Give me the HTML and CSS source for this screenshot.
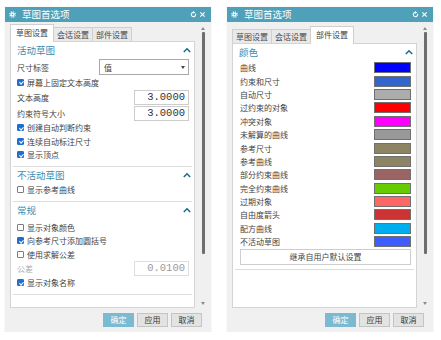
FILE: index.html
```html
<!DOCTYPE html>
<html lang="zh-CN">
<head>
    <meta charset="UTF-8">
    <meta name="viewport" content="width=device-width, initial-scale=1.0">
    <title>草图首选项</title>
    <link rel="stylesheet" href="styles.css">
</head>
<body>
<div class="desk">

    <!-- 草图设置 -->
    <div class="dialog">
        <div class="titlebar">
            <svg class="gear" viewBox="0 0 16 16"><circle cx="8" cy="8" r="6" fill="none" stroke="#fff" stroke-width="3.2" stroke-dasharray="2.4 2.32"/><circle cx="8" cy="8" r="4.6" fill="#fff"/><circle cx="8" cy="8" r="1.9" fill="#4fa1b9"/></svg>
            <span class="title">草图首选项</span>
            <svg class="tb-icon" viewBox="0 0 16 16"><path d="M12.6 6.2A5 5 0 1 1 8 3" fill="none" stroke="#fff" stroke-width="2.4"/><polygon points="7,0 12,3.2 7,6.4" fill="#fff"/></svg>
            <svg class="tb-icon" viewBox="0 0 16 16"><path d="M3 3L13 13M13 3L3 13" stroke="#fff" stroke-width="2.6"/></svg>
        </div>
        <div class="main">
            <div class="content">
                <div class="tabs">
                    <div class="tab active">草图设置</div>
                    <div class="tab">会话设置</div>
                    <div class="tab">部件设置</div>
                </div>
                <div class="panel">
                    <div class="section">
                        <div class="sec-head"><span>活动草图</span><svg class="caret" viewBox="0 0 10 7"><polyline points="1,6 5,2 9,6" fill="none" stroke="#1f6e92" stroke-width="2"/></svg></div>
                        <div class="row field tall"><span>尺寸标签</span><div class="select"><span>值</span><i class="dd"></i></div></div>
                        <div class="row check on short"><i class="box"></i>屏幕上固定文本高度</div>
                        <div class="row field"><span>文本高度</span><div class="num">3.0000</div></div>
                        <div class="row field"><span>约束符号大小</span><div class="num">3.0000</div></div>
                        <div class="row check on"><i class="box"></i>创建自动判断约束</div>
                        <div class="row check on"><i class="box"></i>连续自动标注尺寸</div>
                        <div class="row check on"><i class="box"></i>显示顶点</div>
                    </div>
                    <div class="section">
                        <div class="sec-head"><span>不活动草图</span><svg class="caret" viewBox="0 0 10 7"><polyline points="1,6 5,2 9,6" fill="none" stroke="#1f6e92" stroke-width="2"/></svg></div>
                        <div class="row check"><i class="box"></i>显示参考曲线</div>
                    </div>
                    <div class="section">
                        <div class="sec-head"><span>常规</span><svg class="caret" viewBox="0 0 10 7"><polyline points="1,6 5,2 9,6" fill="none" stroke="#1f6e92" stroke-width="2"/></svg></div>
                        <div class="row check first"><i class="box"></i>显示对象颜色</div>
                        <div class="row check on"><i class="box"></i>向参考尺寸添加圆括号</div>
                        <div class="row check"><i class="box"></i>使用求解公差</div>
                        <div class="row field mid off"><span>公差</span><div class="num">0.0100</div></div>
                        <div class="row check on"><i class="box"></i>显示对象名称</div>
                    </div>
                </div>
            </div>
            <div class="scroll">
                <i class="sc-up"></i>
                <i class="thumb"></i>
                <i class="sc-space"></i>
                <i class="sc-down"></i>
            </div>
        </div>
        <div class="footer">
            <div class="btn primary">确定</div>
            <div class="btn">应用</div>
            <div class="btn">取消</div>
        </div>
    </div>

    <!-- 部件设置 -->
    <div class="dialog">
        <div class="titlebar">
            <svg class="gear" viewBox="0 0 16 16"><circle cx="8" cy="8" r="6" fill="none" stroke="#fff" stroke-width="3.2" stroke-dasharray="2.4 2.32"/><circle cx="8" cy="8" r="4.6" fill="#fff"/><circle cx="8" cy="8" r="1.9" fill="#4fa1b9"/></svg>
            <span class="title">草图首选项</span>
            <svg class="tb-icon" viewBox="0 0 16 16"><path d="M12.6 6.2A5 5 0 1 1 8 3" fill="none" stroke="#fff" stroke-width="2.4"/><polygon points="7,0 12,3.2 7,6.4" fill="#fff"/></svg>
            <svg class="tb-icon" viewBox="0 0 16 16"><path d="M3 3L13 13M13 3L3 13" stroke="#fff" stroke-width="2.6"/></svg>
        </div>
        <div class="main">
            <div class="content lower">
                <div class="tabs">
                    <div class="tab">草图设置</div>
                    <div class="tab">会话设置</div>
                    <div class="tab active">部件设置</div>
                </div>
                <div class="panel">
                    <div class="section">
                        <div class="sec-head"><span>颜色</span><svg class="caret" viewBox="0 0 10 7"><polyline points="1,6 5,2 9,6" fill="none" stroke="#1f6e92" stroke-width="2"/></svg></div>
                        <div class="colors">
                            <div class="crow"><span>曲线</span><i class="swatch c-curve"></i></div>
                            <div class="crow"><span>约束和尺寸</span><i class="swatch c-dim"></i></div>
                            <div class="crow"><span>自动尺寸</span><i class="swatch c-auto"></i></div>
                            <div class="crow"><span>过约束的对象</span><i class="swatch c-over"></i></div>
                            <div class="crow"><span>冲突对象</span><i class="swatch c-conflict"></i></div>
                            <div class="crow"><span>未解算的曲线</span><i class="swatch c-unsolved"></i></div>
                            <div class="crow"><span>参考尺寸</span><i class="swatch c-ref"></i></div>
                            <div class="crow"><span>参考曲线</span><i class="swatch c-ref"></i></div>
                            <div class="crow"><span>部分约束曲线</span><i class="swatch c-partial"></i></div>
                            <div class="crow"><span>完全约束曲线</span><i class="swatch c-full"></i></div>
                            <div class="crow"><span>过期对象</span><i class="swatch c-stale"></i></div>
                            <div class="crow"><span>自由度箭头</span><i class="swatch c-dof"></i></div>
                            <div class="crow"><span>配方曲线</span><i class="swatch c-recipe"></i></div>
                            <div class="crow"><span>不活动草图</span><i class="swatch c-inactive"></i></div>
                        </div>
                        <div class="inherit">继承自用户默认设置</div>
                    </div>
                </div>
            </div>
            <div class="scroll">
                <i class="sc-up"></i>
                <i class="thumb"></i>
                <i class="sc-space"></i>
                <i class="sc-down"></i>
            </div>
        </div>
        <div class="footer">
            <div class="btn primary">确定</div>
            <div class="btn">应用</div>
            <div class="btn">取消</div>
        </div>
    </div>

</div>
</body>
</html>
```

FILE: styles.css
```css
body {
    margin: 0;
    background: #ffffff;
    font-family: "Noto Sans CJK SC", "Noto Sans", sans-serif;
    font-size: 8px;
    color: #3f3f3f;
}
.desk {
    display: flex;
    gap: 16px;
    padding: 7px 0 0 5px;
}

/* dialog frame */
.dialog {
    width: 206px;
    height: 325px;
    display: flex;
    flex-direction: column;
    background: #f0f0f0;
    box-shadow: 0 0 1px rgba(0, 0, 0, 0.15);
}
.titlebar {
    height: 15px;
    flex: none;
    display: flex;
    align-items: center;
    gap: 2px;
    padding: 0 5px 0 4px;
    background: #4fa1b9;
    color: #ffffff;
    font-size: 9.5px;
}
.gear {
    width: 7px;
    height: 7px;
    margin-right: 4px;
}
.title {
    flex: 1;
    line-height: 15px;
}
.tb-icon {
    width: 7px;
    height: 7px;
}

.main {
    flex: 1;
    min-height: 0;
    display: flex;
    padding: 2px 0 0 5px;
}
.content {
    width: 185px;
    display: flex;
    flex-direction: column;
}
.content.lower {
    padding-top: 2px;
}

/* tabs */
.tabs {
    height: 17px;
    flex: none;
    display: flex;
    align-items: flex-end;
}
.tab {
    height: 14px;
    line-height: 13px;
    padding: 0 3px;
    box-sizing: border-box;
    background: #e9e9e9;
    border: 1px solid #cfcfcf;
    border-bottom: none;
    margin-right: -1px;
    color: #4a4a4a;
}
.tab.active {
    height: 18px;
    line-height: 16px;
    padding: 0 5px;
    margin-bottom: -1px;
    background: #ffffff;
    position: relative;
    z-index: 1;
    color: #3f3f3f;
}

.panel {
    flex: 1;
    background: #ffffff;
    border: 1px solid #d4d4d4;
    padding: 0 2px;
    overflow: hidden;
}

/* sections */
.section {
    padding: 0 3px 4.5px 4px;
    border-bottom: 1px solid #dcdcdc;
}
.sec-head {
    height: 16px;
    display: flex;
    align-items: center;
    justify-content: space-between;
    color: #3a8db3;
    font-size: 9.5px;
}
.caret {
    width: 8px;
    height: 6px;
    margin-right: -2px;
}
.row {
    height: 13.5px;
    display: flex;
    align-items: center;
    white-space: nowrap;
}
.row.field {
    height: 16px;
    justify-content: space-between;
}
.row.field.tall {
    height: 18px;
}
.row.field.mid {
    height: 15px;
}
.row.short {
    height: 13px;
}
.row.first {
    margin-top: 2.5px;
}
.row.off {
    color: #a8a8a8;
}

.box {
    width: 7px;
    height: 7px;
    flex: none;
    box-sizing: border-box;
    border: 1px solid #7c7c7c;
    border-radius: 1px;
    background: #ffffff;
    margin-right: 3px;
}
.check.on .box {
    background: #1f6fd0;
    border-color: #1f6fd0;
}
.check.on .box::after {
    content: "";
    display: block;
    width: 1.5px;
    height: 3px;
    margin: 0.3px 0 0 1.6px;
    border: solid #ffffff;
    border-width: 0 1px 1px 0;
    transform: rotate(45deg);
}

.select {
    width: 90px;
    height: 16px;
    box-sizing: border-box;
    border: 1px solid #a9a9a9;
    padding: 0 3px 0 4px;
    display: flex;
    align-items: center;
    justify-content: space-between;
}
.dd {
    width: 0;
    height: 0;
    border-left: 2px solid transparent;
    border-right: 2px solid transparent;
    border-top: 3px solid #444444;
}
.num {
    width: 55px;
    height: 15px;
    box-sizing: border-box;
    border: 1px solid #cccccc;
    padding-right: 3px;
    text-align: right;
    font-family: "Liberation Mono", "DejaVu Sans Mono", monospace;
    font-size: 10.5px;
    line-height: 13px;
    color: #333333;
}
.off .num {
    border-color: #dedede;
    color: #9a9a9a;
}

/* colour list */
.colors {
    margin-top: 1px;
}
.crow {
    height: 13.4px;
    display: flex;
    align-items: center;
    justify-content: space-between;
    padding-left: 1px;
}
.swatch {
    width: 37px;
    height: 11px;
    box-sizing: border-box;
    border: 1px solid #707070;
}
.c-curve { background: #0000ff; }
.c-dim { background: #3366cc; }
.c-auto { background: #acacac; }
.c-over { background: #ff0000; }
.c-conflict { background: #ff00ff; }
.c-unsolved { background: #999999; }
.c-ref { background: #8c8462; }
.c-partial { background: #9a6464; }
.c-full { background: #66cc00; }
.c-stale { background: #ff6666; }
.c-dof { background: #cc3333; }
.c-recipe { background: #00adef; }
.c-inactive { background: #3f5cff; }

.inherit {
    height: 16px;
    margin: 0.5px 0 0 1px;
    box-sizing: border-box;
    border: 1px solid #cdcdcd;
    text-align: center;
    line-height: 14px;
    color: #444444;
}

/* scrollbar */
.scroll {
    flex: 1;
    display: flex;
    flex-direction: column;
    align-items: center;
    padding: 3px 0 3px;
}
.sc-up {
    width: 0;
    height: 0;
    border-left: 2.5px solid transparent;
    border-right: 2.5px solid transparent;
    border-bottom: 3px solid #8c8c8c;
}
.sc-down {
    width: 0;
    height: 0;
    border-left: 2.5px solid transparent;
    border-right: 2.5px solid transparent;
    border-top: 3px solid #8c8c8c;
}
.thumb {
    width: 3px;
    height: 222px;
    margin-top: 2px;
    background: #6e6e6e;
    border-radius: 1px;
}
.sc-space {
    flex: 1;
}

/* buttons */
.footer {
    height: 24px;
    flex: none;
    box-sizing: border-box;
    display: flex;
    justify-content: flex-end;
    align-items: flex-start;
    gap: 3px;
    padding: 5px 9px 0 0;
}
.btn {
    width: 31px;
    height: 14px;
    box-sizing: border-box;
    border: 1px solid #c4c4c4;
    background: #e3e3e3;
    text-align: center;
    line-height: 12px;
    color: #333333;
}
.btn.primary {
    background: #7bbad0;
    border-color: #7bbad0;
    color: #ffffff;
}
```
